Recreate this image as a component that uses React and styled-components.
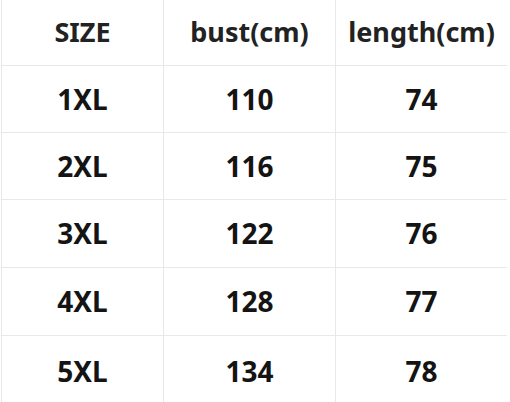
import React from "react";
import styled, { createGlobalStyle } from "styled-components";

const Global = createGlobalStyle`
  html, body { margin: 0; padding: 0; background: #ffffff; }
  body { font-family: "Noto Sans", "Open Sans", sans-serif; }
`;

const Table = styled.div`
  display: grid;
  grid-template-columns: 161px 171px 171px;
  grid-template-rows: 65px 66px 66px 67px 67px 70px;
  gap: 1px;
  background: #e8e8e8;
  margin-left: 1px;
  padding-left: 1px;
  width: max-content;
  height: 402px;
  overflow: hidden;
`;

const Cell = styled.div`
  background: #ffffff;
  display: flex;
  align-items: center;
  justify-content: center;
  font-family: "Noto Sans", sans-serif;
  font-weight: 700;
  font-size: ${(p) => (p.$head ? "27px" : "28px")};
  color: ${(p) => (p.$head ? "#222222" : "#141414")};
  padding-bottom: ${(p) => (p.$head ? "2px" : "1px")};
  box-sizing: border-box;
`;

const Pad = styled.div`
  background: #ffffff;
`;

const head = ["SIZE", "bust(cm)", "length(cm)"];
const rows = [
  ["1XL", "110", "74"],
  ["2XL", "116", "75"],
  ["3XL", "122", "76"],
  ["4XL", "128", "77"],
  ["5XL", "134", "78"],
];

export default function App() {
  return (
    <>
      <Global />
      <Table>
        {head.map((h) => (
          <Cell key={h} $head>
            {h}
          </Cell>
        ))}
        {rows.map((r) =>
          r.map((v, i) => <Cell key={r[0] + i}>{v}</Cell>)
        )}
      </Table>
    </>
  );
}
